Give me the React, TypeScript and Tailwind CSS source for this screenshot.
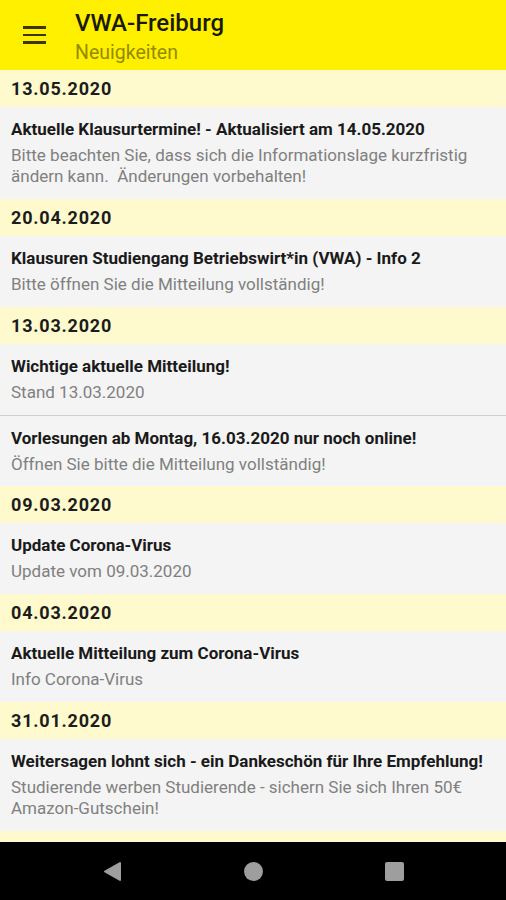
import React from "react";

type NewsItem = { title: string; text: string; divider?: boolean };
type Group = { date: string; items: NewsItem[] };

const NEWS: Group[] = [
  {
    date: "13.05.2020",
    items: [
      {
        title: "Aktuelle Klausurtermine! - Aktualisiert am 14.05.2020",
        text: "Bitte beachten Sie, dass sich die Informationslage kurzfristig ändern kann.\u00a0 Änderungen vorbehalten!",
      },
    ],
  },
  {
    date: "20.04.2020",
    items: [
      {
        title: "Klausuren Studiengang Betriebswirt*in (VWA) - Info 2",
        text: "Bitte öffnen Sie die Mitteilung vollständig!",
      },
    ],
  },
  {
    date: "13.03.2020",
    items: [
      { title: "Wichtige aktuelle Mitteilung!", text: "Stand 13.03.2020" },
      {
        title: "Vorlesungen ab Montag, 16.03.2020 nur noch online!",
        text: "Öffnen Sie bitte die Mitteilung vollständig!",
        divider: true,
      },
    ],
  },
  {
    date: "09.03.2020",
    items: [{ title: "Update Corona-Virus", text: "Update vom 09.03.2020" }],
  },
  {
    date: "04.03.2020",
    items: [
      { title: "Aktuelle Mitteilung zum Corona-Virus", text: "Info Corona-Virus" },
    ],
  },
  {
    date: "31.01.2020",
    items: [
      {
        title: "Weitersagen lohnt sich - ein Dankeschön für Ihre Empfehlung!",
        text: "Studierende werben Studierende - sichern Sie sich Ihren 50€ Amazon-Gutschein!",
      },
    ],
  },
  { date: "09.10.2019", items: [] },
];

export default function App() {
  return (
    <div className="flex h-[900px] w-[506px] flex-col overflow-hidden bg-[#f4f4f4] font-['Roboto',sans-serif]">
      <header className="flex h-[70px] shrink-0 items-start bg-[#fff000]">
        <div className="flex h-full w-[75px] items-center pl-[23px]">
          <div className="flex w-[23px] flex-col gap-[5px]">
            <span className="h-[2.5px] bg-[#3b3700]" />
            <span className="h-[2.5px] bg-[#3b3700]" />
            <span className="h-[2.5px] bg-[#3b3700]" />
          </div>
        </div>
        <div className="pt-[8px]">
          <h1 className="text-[24px] font-medium leading-[30px] text-[#1a1a00]">
            VWA-Freiburg
          </h1>
          <p className="text-[19.5px] leading-[30px] text-[#948a00]">Neuigkeiten</p>
        </div>
      </header>

      <main className="flex-1 overflow-hidden">
        {NEWS.map((group) => (
          <section key={group.date}>
            <div className="flex h-[37px] items-center bg-[#fffacd] px-[11px] text-[18px] font-bold tracking-[0.8px] text-[#1c1c1c]">
              {group.date}
            </div>
            {group.items.map((item) => (
              <div
                key={item.title}
                className={
                  item.divider
                    ? "border-t border-[#cfcfcf] bg-[#f4f4f4] px-[11px] pt-[11px] pb-[11px]"
                    : "bg-[#f4f4f4] px-[11px] pt-[11px] pb-[12px]"
                }
              >
                <h2 className="text-[17px] font-bold leading-[22px] text-[#1a1a1a]">
                  {item.title}
                </h2>
                <p className="mt-[5px] text-[17px] leading-[21px] text-[#808080]">
                  {item.text}
                </p>
              </div>
            ))}
          </section>
        ))}
      </main>

      <nav className="flex h-[58px] shrink-0 items-center justify-center gap-[122px] bg-black">
        <svg width="19" height="21" viewBox="0 0 19 21">
          <path d="M17 2 L17 19 L2 10.5 Z" fill="#9e9e9e" stroke="#9e9e9e" strokeWidth="2" strokeLinejoin="round" />
        </svg>
        <span className="h-[19px] w-[19px] rounded-full bg-[#9e9e9e]" />
        <span className="h-[19px] w-[19px] rounded-[2px] bg-[#9e9e9e]" />
      </nav>
    </div>
  );
}
